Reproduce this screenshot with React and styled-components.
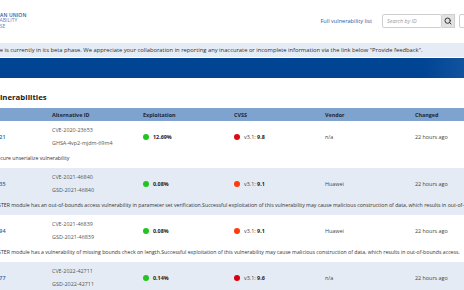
import styled, { createGlobalStyle } from "styled-components";
import { Search } from "lucide-react";

const GlobalStyle = createGlobalStyle`
    html, body {
        margin:0;
        padding:0;
        background:#ffffff;
        overflow:hidden;
        width:464px;
        height:290px;
    }
    body {
        font-family:"Open Sans", "DejaVu Sans", sans-serif;
        color:#333;
    }
`

const rows = [
    {
        id: "EUVD-2024-54821",
        alt: ["CVE-2020-23653", "GHSA-4vp2-mjdm-69m4"],
        epss: "12.69%",
        score: "9.8",
        scoreColor: "#dd0a12",
        vendor: "n/a",
        changed: "22 hours ago",
        desc: "ThinkAdmin insecure unserialize vulnerability",
        shaded: false,
    },
    {
        id: "EUVD-2024-54835",
        alt: ["CVE-2021-46840", "GSD-2021-46840"],
        epss: "0.08%",
        score: "9.1",
        scoreColor: "#ff3b0a",
        vendor: "Huawei",
        changed: "22 hours ago",
        desc: "The HW_KEYMASTER module has an out-of-bounds access vulnerability in parameter set verification.Successful exploitation of this vulnerability may cause malicious construction of data, which results in out-of-bounds access.",
        shaded: true,
    },
    {
        id: "EUVD-2024-54794",
        alt: ["CVE-2021-46839", "GSD-2021-46839"],
        epss: "0.08%",
        score: "9.1",
        scoreColor: "#ff3b0a",
        vendor: "Huawei",
        changed: "22 hours ago",
        desc: "The HW_KEYMASTER module has a vulnerability of missing bounds check on length.Successful exploitation of this vulnerability may cause malicious construction of data, which results in out-of-bounds access.",
        shaded: false,
    },
    {
        id: "EUVD-2024-54777",
        alt: ["CVE-2022-42711", "GSD-2022-42711"],
        epss: "0.14%",
        score: "9.6",
        scoreColor: "#d8000f",
        vendor: "n/a",
        changed: "22 hours ago",
        desc: "",
        shaded: true,
    },
]

const App = () => {
    return (
        <>
            <GlobalStyle />
            <Page>
                <Header>
                    <Logo>
                        <LogoLine $strong>EUROPEAN UNION</LogoLine>
                        <LogoLine>VULNERABILITY</LogoLine>
                        <LogoLine>DATABASE</LogoLine>
                    </Logo>
                    <HeaderRight>
                        <NavLink href="#">Full vulnerability list</NavLink>
                        <SearchGroup>
                            <SearchInput placeholder="Search by ID" />
                            <SearchButton><Search size={8} strokeWidth={3} color="#333" /></SearchButton>
                        </SearchGroup>
                        <SearchInput placeholder="Search" />
                    </HeaderRight>
                </Header>
                <BetaBanner>
                    This site is currently in its beta phase. We appreciate your collaboration in reporting any inaccurate or incomplete information via the link below "Provide feedback".
                </BetaBanner>
                <Band />
                <Main>
                    <Heading>Critical Vulnerabilities</Heading>
                    <Table>
                        <HeadRow>
                            <HeadCell>EUVD ID</HeadCell>
                            <HeadCell>Alternative ID</HeadCell>
                            <HeadCell>Exploitation</HeadCell>
                            <HeadCell>CVSS</HeadCell>
                            <HeadCell>Vendor</HeadCell>
                            <HeadCell>Changed</HeadCell>
                        </HeadRow>
                        {rows.map((r) => (
                            <Row key={r.id} $shaded={r.shaded}>
                                <MainLine>
                                    <IdLink href="#">{r.id}</IdLink>
                                    <AltIds>
                                        {r.alt.map((a) => <span key={a}>{a}</span>)}
                                    </AltIds>
                                    <Cell><Dot $color="#22c41f" /><b>{r.epss}</b></Cell>
                                    <Cell><Dot $color={r.scoreColor} />v3.1:&nbsp;<b>{r.score}</b></Cell>
                                    <Cell>{r.vendor}</Cell>
                                    <Cell>{r.changed}</Cell>
                                </MainLine>
                                <Desc>{r.desc}</Desc>
                            </Row>
                        ))}
                    </Table>
                </Main>
            </Page>
        </>
    )
}

const Page = styled.div`
    margin-left:-40px;
    width:579px;
`

const Header = styled.header`
    height:42px;
    display:flex;
    align-items:center;
    padding:0 20px 0 20px;
`

const Logo = styled.div`
    display:flex;
    flex-direction:column;
`

const LogoLine = styled.span`
    font-size:5px;
    line-height:5.5px;
    letter-spacing:0.1px;
    font-weight:${p => p.$strong ? 600 : 400};
    color:${p => p.$strong ? "#2457a3" : "#5b86c4"};
`

const HeaderRight = styled.div`
    margin-left:auto;
    display:flex;
    align-items:center;
    gap:4px;
`

const NavLink = styled.a`
    font-size:5.6px;
    color:#2a5aa6;
    text-decoration:none;
    margin-right:6px;
`

const SearchGroup = styled.div`
    display:flex;
`

const SearchInput = styled.input`
    box-sizing:border-box;
    width:60px;
    height:14px;
    border:1px solid #cfcfcf;
    border-radius:2px;
    padding:0 4px;
    font-family:"Open Sans", sans-serif;
    font-size:5.4px;
    font-style:italic;
    outline:none;
    &::placeholder { color:#9a9a9a; }
`

const SearchButton = styled.button`
    box-sizing:border-box;
    width:13px;
    height:14px;
    padding:0;
    border:1px solid #cfcfcf;
    border-left:none;
    background:#e2e2e2;
    display:flex;
    align-items:center;
    justify-content:center;
`

const BetaBanner = styled.div`
    margin-top:1px;
    height:14px;
    line-height:14px;
    background:#e5ecf5;
    padding-left:21px;
    font-size:5.8px;
    color:#2e2e2e;
    white-space:nowrap;
`

const Band = styled.div`
    margin-top:1px;
    height:20px;
    background:linear-gradient(90deg, #004494 0%, #004494 80%, #14559f 88%, #2d67ad 96%);
`

const Main = styled.main`
    padding-top:13px;
`

const Heading = styled.h2`
    margin:0 0 5px 0;
    font-size:7.8px;
    line-height:12px;
    font-weight:700;
    color:#222;
`

const Table = styled.div`
    display:flex;
    flex-direction:column;
`

const columns = "92px 91px 91px 91px 90px 1fr"

const HeadRow = styled.div`
    display:grid;
    grid-template-columns:${columns};
    height:13px;
    align-items:center;
    background:#7fa3cf;
`

const HeadCell = styled.div`
    font-size:5.4px;
    font-weight:700;
    color:#1d2733;
`

const Row = styled.div`
    height:47px;
    box-sizing:border-box;
    padding-top:3px;
    background:${p => p.$shaded ? "#e4ebf4" : "#ffffff"};
`

const MainLine = styled.div`
    display:grid;
    grid-template-columns:${columns};
    align-items:center;
    height:25px;
`

const Cell = styled.div`
    display:flex;
    align-items:center;
    font-size:5.4px;
    color:#444;
    b { color:#222; font-weight:700; }
`

const IdLink = styled.a`
    font-size:5.4px;
    font-weight:600;
    color:#2a5aa6;
    text-decoration:none;
`

const AltIds = styled.div`
    display:flex;
    flex-direction:column;
    font-size:5.4px;
    line-height:12.5px;
    color:#555;
`

const Dot = styled.span`
    width:6px;
    height:6px;
    border-radius:50%;
    background:${p => p.$color};
    margin-right:4px;
    flex-shrink:0;
`

const Desc = styled.div`
    margin-top:3px;
    font-size:5.2px;
    line-height:12px;
    color:#333;
    white-space:nowrap;
`

export default App;
